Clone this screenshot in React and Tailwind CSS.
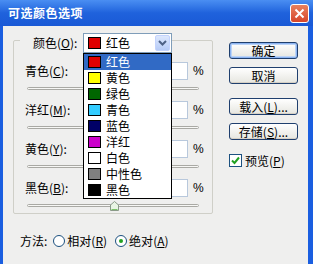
import React from 'react';

const swatches = [
  ['红色', '#e00000'],
  ['黄色', '#ffff00'],
  ['绿色', '#006600'],
  ['青色', '#33ccff'],
  ['蓝色', '#000066'],
  ['洋红', '#cc00cc'],
  ['白色', '#ffffff'],
  ['中性色', '#808080'],
  ['黑色', '#000000'],
];

const sliders = [
  ['青色', 'C'],
  ['洋红', 'M'],
  ['黄色', 'Y'],
  ['黑色', 'B'],
];

function Mn({ base, k, tail = '' }) {
  return (
    <span className="whitespace-nowrap">
      {base}(<span className="underline">{k}</span>){tail}
    </span>
  );
}

function XpButton({ children, isDefault }) {
  return (
    <div
      className={
        'h-[17px] w-[69px] rounded-[3px] border border-[#1f3f6e] flex items-center justify-center text-[12px] leading-none bg-gradient-to-b from-white to-[#e6e6e0] ' +
        (isDefault ? 'shadow-[inset_0_0_0_1px_#8cb4f2,inset_0_0_0_2px_#bcd4f6]' : 'shadow-[inset_0_-1px_0_#d6d0c5]')
      }
    >
      {children}
    </div>
  );
}

function Thumb() {
  return (
    <svg width="9" height="10" viewBox="0 0 9 10">
      <path d="M4.5 0.5 L8.5 4 L8.5 9.5 L0.5 9.5 L0.5 4 Z" fill="#e9f5e4" stroke="#8a9a88" />
      <path d="M1.5 8.5 H7.5" stroke="#7cc46a" />
    </svg>
  );
}

export default function App() {
  return (
    <div className="w-[313px] h-[264px] flex flex-col bg-[#1a5ee0] overflow-hidden font-['Noto_Sans_CJK_SC','Liberation_Sans',sans-serif] text-black">
      {/* title bar */}
      <div className="h-[26px] shrink-0 flex items-center justify-between pl-[8px] pr-[4px] bg-gradient-to-b from-[#4a8ef2] via-[#1f62dc] to-[#1a59d6]">
        <span className="text-white font-bold text-[12px] leading-none tracking-[0.5px]">可选颜色选项</span>
        <div className="w-[19px] h-[19px] rounded-[3px] border border-white bg-gradient-to-b from-[#e8805e] to-[#d6452a] flex items-center justify-center">
          <svg width="11" height="11" viewBox="0 0 11 11">
            <path d="M1.5 1.5 L9.5 9.5 M9.5 1.5 L1.5 9.5" stroke="white" strokeWidth="2" />
          </svg>
        </div>
      </div>

      {/* body */}
      <div className="flex-1 ml-[3px] mr-[5px] bg-[#efefee] flex flex-col">
        <div className="flex items-start">
          {/* group box */}
          <div className="ml-[10px] mt-[14px] w-[200px] h-[174px] border border-[#cfcfc8] rounded-[2px]">
            <div className="relative -mt-[8px] ml-[6px] w-[152px] h-[20px] flex items-center bg-[#efefee]">
              <span className="ml-[13px] shrink-0 text-[12px] leading-none">
                <Mn base="颜色" k="O" tail=":" />
              </span>
              <div className="relative ml-auto shrink-0 w-[89px] h-[20px] bg-white border border-[#7f9db9] flex items-center">
                <div className="ml-[4px] w-[13px] h-[12px] bg-[#e00000] border border-black" />
                <span className="ml-[5px] text-[12px] leading-none">红色</span>
                <div className="ml-auto mr-[1px] w-[15px] h-[16px] rounded-[2px] bg-gradient-to-b from-[#dde8fd] to-[#b6cbf7] border border-[#c3d3fd] flex items-center justify-center">
                  <svg width="9" height="6" viewBox="0 0 9 6">
                    <path d="M1 1 L4.5 4.5 L8 1" stroke="#4d6185" strokeWidth="2" fill="none" />
                  </svg>
                </div>

                {/* open list */}
                <div className="absolute z-10 left-[-1px] top-[19px] w-[89px] bg-white border border-black">
                  {swatches.map(([name, color], i) => (
                    <div
                      key={name}
                      className={
                        'h-[16px] flex items-center ' + (i === 0 ? 'bg-[#316ac5] text-white' : '')
                      }
                    >
                      <div className="ml-[4px] w-[13px] h-[12px] border border-black" style={{ backgroundColor: color }} />
                      <span className="ml-[5px] text-[12px] leading-none">{name}</span>
                    </div>
                  ))}
                </div>
              </div>
            </div>

            <div className="mt-[9px] flex flex-col">
              {sliders.map(([name, k], i) => (
                <div key={k} className="h-[39px] shrink-0 flex flex-col">
                  <div className="h-[18px] flex items-center pr-[7px]">
                    <span className="ml-[11px] flex-1 text-[12px] leading-none">
                      <Mn base={name} k={k} tail=":" />
                    </span>
                    <div className="w-[40px] h-[18px] bg-white border border-[#b8c8dc]" />
                    <span className="ml-[5px] w-[12px] text-[12px] leading-none font-['Liberation_Sans',sans-serif]">%</span>
                  </div>
                  <div className="relative mt-[7px] ml-[13px] w-[172px] h-[3px] rounded-full border border-[#a9a9a4] bg-[#f7f7f5]">
                    {i === 3 && (
                      <div className="absolute left-[82px] top-[-4px]">
                        <Thumb />
                      </div>
                    )}
                  </div>
                </div>
              ))}
            </div>
          </div>

          {/* right column */}
          <div className="ml-[16px] mt-[16px] flex flex-col">
            <XpButton isDefault>确定</XpButton>
            <div className="mt-[8px]">
              <XpButton>取消</XpButton>
            </div>
            <div className="mt-[14px]">
              <XpButton>
                <Mn base="载入" k="L" tail="..." />
              </XpButton>
            </div>
            <div className="mt-[8px]">
              <XpButton>
                <Mn base="存储" k="S" tail="..." />
              </XpButton>
            </div>
            <div className="mt-[14px] flex items-center">
              <div className="w-[13px] h-[13px] bg-white border border-[#1c5180] flex items-center justify-center">
                <svg width="9" height="9" viewBox="0 0 9 9">
                  <path d="M1 4.5 L3.5 7 L8 1.5" stroke="#21a121" strokeWidth="2" fill="none" />
                </svg>
              </div>
              <span className="ml-[3px] text-[12px] leading-none">
                <Mn base="预览" k="P" />
              </span>
            </div>
          </div>
        </div>

        {/* method row */}
        <div className="mt-[21px] ml-[17px] flex items-center text-[12px] leading-none">
          <span>方法:</span>
          <div className="ml-[6px] w-[12px] h-[12px] rounded-full bg-white border border-[#1c5180]" />
          <span className="ml-[2px]">
            <Mn base="相对" k="R" />
          </span>
          <div className="ml-[8px] w-[12px] h-[12px] rounded-full bg-white border border-[#1c5180] flex items-center justify-center">
            <div className="w-[4px] h-[4px] rounded-full bg-[#21a121]" />
          </div>
          <span className="ml-[2px]">
            <Mn base="绝对" k="A" />
          </span>
        </div>
      </div>
    </div>
  );
}
